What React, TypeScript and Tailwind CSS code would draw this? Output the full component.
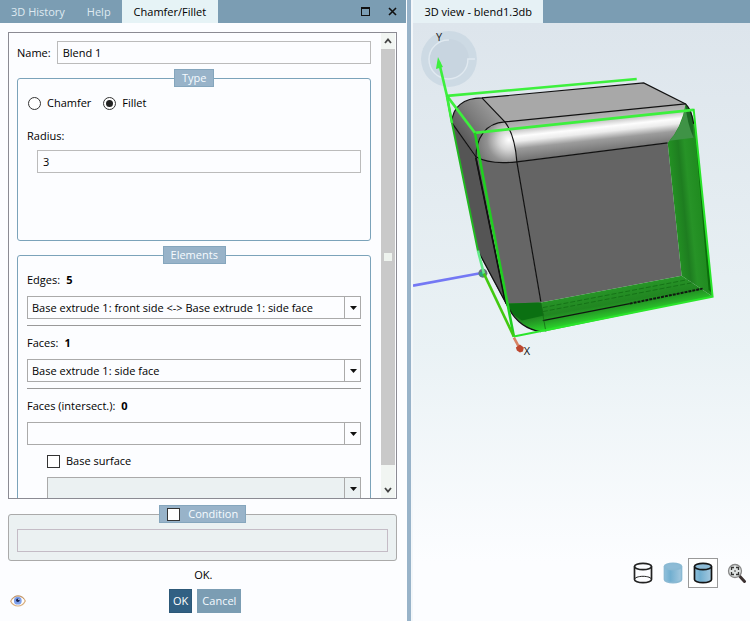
import { useState } from 'react'
import type { ReactNode } from 'react'
import clsx from 'clsx'

const edgeOptions = ['Base extrude 1: front side <-> Base extrude 1: side face']
const faceOptions = ['Base extrude 1: side face']

type GroupProps = {
  legend: ReactNode
  className?: string
  children: ReactNode
}

function Group({ legend, className, children }: GroupProps) {
  return (
    <fieldset className={clsx('min-w-0 rounded-[3px] border', className)}>
      <legend className="mx-auto flex h-[18px] items-center border border-[#85a6bd] bg-[#98b3c9] px-[7px] text-[#f6fbff]">
        {legend}
      </legend>
      {children}
    </fieldset>
  )
}

type ComboProps = {
  id: string
  label: string
  options: string[]
  disabled?: boolean
}

function Combo({ id, label, options, disabled }: ComboProps) {
  return (
    <div className="relative">
      <select
        id={id}
        aria-label={label}
        disabled={disabled}
        className={clsx(
          'block h-[23px] w-full appearance-none border border-[#aaa] pr-5 pl-1 opacity-100 outline-none',
          disabled ? 'bg-[#ebf1f2]' : 'bg-[#fcfdff]',
        )}
      >
        {options.map((o) => (
          <option key={o}>{o}</option>
        ))}
      </select>
      <span className="pointer-events-none absolute inset-y-0 right-0 flex w-[17px] items-center justify-center border-l border-[#aaa]">
        <svg viewBox="0 0 7 4" className="h-1 w-[7px]">
          <path d="M0 0h7L3.5 4z" fill="#111" />
        </svg>
      </span>
    </div>
  )
}

type ChoiceProps = {
  label: string
  checked: boolean
  onChange: () => void
}

function Choice({ label, checked, onChange }: ChoiceProps) {
  return (
    <label className="flex items-center gap-[6px]">
      <input
        type="radio"
        name="blend-type"
        checked={checked}
        onChange={onChange}
        className="grid size-[13px] appearance-none place-items-center rounded-full border border-[#333] bg-white before:size-[7px] before:rounded-full checked:before:bg-[#222]"
      />
      {label}
    </label>
  )
}

function Counter({ label, count, htmlFor }: { label: string; count: number; htmlFor: string }) {
  return (
    <label htmlFor={htmlFor} className="flex h-4 items-center gap-[6px]">
      {label} <b className="font-bold">{count}</b>
    </label>
  )
}

function Scrollbar() {
  return (
    <div className="mr-px flex w-[14px] shrink-0 flex-col bg-[#f1f5f2]">
      <button aria-label="Scroll up" className="grid h-4 place-items-center">
        <svg viewBox="0 0 8 6" className="h-[6px] w-2" fill="none" stroke="#444" strokeWidth="1.8">
          <path d="M1 5l3-3.5L7 5" />
        </svg>
      </button>
      <div className="grid flex-1 place-items-center bg-[#c9c9c9]">
        <span className="size-2 bg-[#eef3ee]" />
      </div>
      <button aria-label="Scroll down" className="flex h-[33px] items-end justify-center pb-[5px]">
        <svg viewBox="0 0 8 6" className="h-[6px] w-2" fill="none" stroke="#444" strokeWidth="1.8">
          <path d="M1 1l3 3.5L7 1" />
        </svg>
      </button>
    </div>
  )
}

function EyeIcon() {
  return (
    <svg viewBox="0 0 16 12" className="h-3 w-4">
      <path d="M.7 6.2C2.500 2.500 5 1 8 1s5.800 1.700 7.300 5C13.500 9.500 11 11 8 11S2.300 9.500.7 6.200z" fill="#fff" stroke="#d8ad7c" strokeWidth="1.200" />
      <path d="M2 4.200C4 1.500 6 .9 8 .9s4.200.8 6 3" fill="none" stroke="#c09870" />
      <circle cx="7.800" cy="5.700" r="3.900" fill="#7d9fea" />
      <circle cx="7.800" cy="5.300" r="1.700" fill="#1b2550" />
      <circle cx="8.800" cy="4.500" r=".6" fill="#fff" />
    </svg>
  )
}

function CylinderIcon({ fill, stroke, wire }: { fill: string; stroke: string; wire?: boolean }) {
  return (
    <svg viewBox="0 0 20 22" className="h-[22px] w-5" fill="none" stroke={stroke} strokeWidth="1.700">
      <defs>
        <linearGradient id="cylBody">
          <stop offset="0" stopColor="#8fc0dc" />
          <stop offset=".35" stopColor="#72afd0" />
          <stop offset="1" stopColor="#a5c9df" />
        </linearGradient>
      </defs>
      <path d="M1.500 4.500v13c0 1.800 3.800 3.200 8.500 3.200s8.500-1.400 8.500-3.200v-13" fill={fill} />
      <ellipse cx="10" cy="4.500" rx="8.500" ry="3.200" fill={wire ? 'none' : '#8dbbd6'} />
      {wire ? <path d="M1.500 17.500c0-1.800 3.800-3.200 8.500-3.200s8.500 1.400 8.500 3.200" strokeWidth="1" /> : null}
    </svg>
  )
}

function ZoomFitIcon() {
  return (
    <svg viewBox="0 0 20 20" className="size-5" fill="none">
      <path d="M12.500 13l5 5.500" stroke="#3c3232" strokeWidth="3" strokeLinecap="round" />
      <circle cx="8" cy="8" r="6.500" fill="#dfe3e3" stroke="#888" strokeWidth="1.300" />
      <path d="M4.500 7V4.500H7M9 4.500h2.500V7M11.500 9v2.500H9M7 11.500H4.500V9" stroke="#333" strokeWidth="1.300" />
      <path d="M7 8h2M8 7v2" stroke="#777" />
    </svg>
  )
}

function Scene() {
  return (
    <svg viewBox="413 23 337 500" className="block w-full" role="img" aria-label="Blended cube">
      <defs>
        <linearGradient id="topFillet" gradientUnits="userSpaceOnUse" x1="560" y1="116" x2="564.500" y2="157">
          <stop offset="0" stopColor="#a6a6a6" />
          <stop offset=".18" stopColor="#b8b8b8" />
          <stop offset=".38" stopColor="#fdfdfd" />
          <stop offset=".5" stopColor="#ececec" />
          <stop offset=".68" stopColor="#9c9c9c" />
          <stop offset="1" stopColor="#6e6e6e" />
        </linearGradient>
        <linearGradient id="leftFillet" gradientUnits="userSpaceOnUse" x1="458" y1="132" x2="490" y2="105">
          <stop offset="0" stopColor="#5b5b5b" />
          <stop offset=".5" stopColor="#7c7c7c" />
          <stop offset="1" stopColor="#999" />
        </linearGradient>
        <radialGradient id="corner" gradientUnits="userSpaceOnUse" cx="509" cy="140" r="34">
          <stop offset="0" stopColor="#fff" />
          <stop offset=".3" stopColor="#d6d6d6" />
          <stop offset=".65" stopColor="#929292" />
          <stop offset="1" stopColor="#727272" />
        </radialGradient>
        <linearGradient id="rightGreen" gradientUnits="userSpaceOnUse" x1="674" y1="200" x2="706" y2="197">
          <stop offset="0" stopColor="#239023" />
          <stop offset=".3" stopColor="#1e7d20" />
          <stop offset=".5" stopColor="#279327" />
          <stop offset=".8" stopColor="#218c21" />
          <stop offset="1" stopColor="#17a317" />
        </linearGradient>
        <linearGradient id="bottomGreen" gradientUnits="userSpaceOnUse" x1="620" y1="288" x2="625" y2="316">
          <stop offset="0" stopColor="#279427" />
          <stop offset=".5" stopColor="#218621" />
          <stop offset=".75" stopColor="#27a827" />
          <stop offset="1" stopColor="#2bd52b" />
        </linearGradient>
      </defs>

      {/* navigation disc */}
      <circle cx="449" cy="59" r="28" fill="#cddae4" />
      <circle cx="449" cy="59" r="20" fill="#c8d5e0" />
      <path d="M449 40a19.500 19.500 0 1 0 19 19h7" fill="none" stroke="#e0e9f0" strokeWidth="1.500" />
      <path d="M447 96L637 79" stroke="#3df03d" strokeWidth="2.600" />

      {/* solid */}
      <path d="M452 123L476 158L483 190L508 308L478 252z" fill="#555" />
      <path d="M476 157Q495 165 517 162L541 303L509 309z" fill="#666" />
      <path d="M517 162L668 143L682 276L541 303z" fill="#646464" />
      <path d="M482 98L644 83L686 104L505 122z" fill="#a8a8a8" />
      <path d="M452 123C452 107 464 98 482 98L505 122C485 123 476 139 476 158z" fill="url(#leftFillet)" />
      <path d="M505 122L686 104Q683 128 668 143L517 162Q515 135 505 122z" fill="url(#topFillet)" />
      <path d="M505 122C485 123 476 139 476 157Q490 165 517 162Q515 135 505 122z" fill="url(#corner)" />

      {/* selected faces */}
      <path d="M668 143Q682 128 686 104Q693 110 695 126L713 297L682 276z" fill="url(#rightGreen)" />
      <path d="M686 107Q682 127 670 141L694 138Q694 115 686 107z" fill="#3f9346" />
      <path d="M686 105Q694 111 694 138Q687 122 686 105z" fill="#1c6a24" />
      <path d="M694 116L696 140L709 290L712 293L699 160z" fill="#0b6d0b" />
      <path d="M509 304L541 303L682 276L713 297L545 332Q524 333 509 309z" fill="url(#bottomGreen)" />
      <path d="M509 304L541 303L544 316L522 321Q512 315 509 309z" fill="#0b7012" />
      <path d="M543 308L688 280M543 312L693 283" stroke="#126c14" strokeWidth=".8" strokeDasharray="5 2" />
      <path d="M543 321L630 304" stroke="#101810" strokeWidth="1.400" />
      <path d="M630 304L703 289" stroke="#101810" strokeWidth="2" strokeDasharray="3 1" />
      <path d="M541 303L546 332" stroke="#176b17" strokeWidth=".8" />

      <g fill="none" stroke="#111" strokeWidth="1.200">
        <path d="M452 123C452 107 464 98 482 98L644 83L686 104Q692 110 694 124" />
        <path d="M482 98L505 122L686 104" />
        <path d="M505 122Q515 135 517 162L541 302" />
        <path d="M505 122C485 123 476 139 476 158L483 192L506 304" />
        <path d="M452 123L476 157Q490 165 517 162L668 143" />
        <path d="M478 251L509 309Q520 329 541 332" />
      </g>
      <path d="M476 158L483 192L505 300" fill="none" stroke="#111" strokeWidth="1.800" />

      {/* bounding frame and axes */}
      <path d="M413 286L483 273" stroke="#7478f4" strokeWidth="2.600" />
      <circle cx="483" cy="273.500" r="4.500" fill="#69757c" />
      <circle cx="482" cy="274.500" r="2.500" fill="#2ba27e" />
      <g fill="none" stroke="#2be52b" strokeWidth="2.600">
        <path d="M439 62L447 96L475 133L694 110" stroke="#3df03d" />
        <path d="M447 96L452 123L478 251" strokeWidth="2" stroke="#20b820" />
        <path d="M447 96L452 123" stroke="#3df03d" />
        <path d="M478 251L484 274" stroke="#62eb88" />
        <path d="M475 133L486 192L514 337" stroke="#20d020" />
        <path d="M484 274L514 337" stroke="#42c910" />
        <path d="M514 337L713 297L694 109" strokeWidth="2" />
      </g>
      <path d="M438 57l5 10-7 2z" fill="#3df03d" />
      <path d="M514 338L520 349" stroke="#d78263" strokeWidth="2.600" />
      <path d="M516 348l4-3 4 3-1 4-3 1-3-2z" fill="#bd472f" />
      <text x="436" y="41" fontSize="11" fill="#222">Y</text>
      <text x="524" y="355" fontSize="11" fill="#111">X</text>
    </svg>
  )
}

const viewModes = [
  { id: 'wire', label: 'Wireframe', fill: 'none', stroke: '#222' },
  { id: 'shaded', label: 'Shaded', fill: 'url(#cylBody)', stroke: '#8ab9d3' },
  { id: 'edges', label: 'Shaded with edges', fill: 'url(#cylBody)', stroke: '#151515' },
]

export default function App() {
  const [name, setName] = useState('Blend 1')
  const [type, setType] = useState<'chamfer' | 'fillet'>('fillet')
  const [radius, setRadius] = useState('3')
  const [mode, setMode] = useState('edges')

  const inputClass = 'block h-[23px] w-full min-w-0 border border-[#bbb] bg-[#fcfdff] px-[5px] outline-none'
  const checkClass = 'size-[13px] appearance-none border border-[#333] bg-white checked:bg-[#333]'

  return (
    <div className="flex h-screen bg-[#fcfdff] font-['Open_Sans','Noto_Sans',sans-serif] text-[11px] leading-4 text-black">
      <section className="flex min-w-0 flex-[407] flex-col pr-px">
        <header className="flex h-[23px] shrink-0 items-stretch bg-[#7b9db3] text-[#dfeaf1]">
          <nav className="flex">
            <button className="px-[11px]">3D History</button>
            <button className="px-[11px]">Help</button>
            <button className="bg-[#e6f3f6] px-3 text-black">Chamfer/Fillet</button>
          </nav>
          <div className="ml-auto flex items-center gap-[18px] pr-[9px] text-black">
            <button aria-label="Maximize" className="h-[9px] w-[9px] border border-t-2 border-[#111]" />
            <button aria-label="Close">
              <svg viewBox="0 0 9 9" className="size-[9px]" stroke="#111" strokeWidth="1.600">
                <path d="M1 1l7 7M8 1L1 8" />
              </svg>
            </button>
          </div>
        </header>

        <form className="flex min-h-0 flex-1 flex-col px-2 pt-[9px] pb-2" onSubmit={(e) => e.preventDefault()}>
          <div className="mr-px flex min-h-0 flex-1 overflow-hidden border border-[#8b8b93]">
            <div className="min-w-0 flex-1 overflow-hidden pt-2 pr-[10px] pl-2">
              <div className="mb-[5px] flex items-center gap-[6px]">
                <label htmlFor="name">Name:</label>
                <input id="name" className={inputClass} value={name} onChange={(e) => setName(e.target.value)} />
              </div>

              <Group legend="Type" className="border-[#7ba3ba] px-[9px] pb-[67px]">
                <div className="flex gap-3 pt-2 pb-[17px] pl-px">
                  <Choice label="Chamfer" checked={type === 'chamfer'} onChange={() => setType('chamfer')} />
                  <Choice label="Fillet" checked={type === 'fillet'} onChange={() => setType('fillet')} />
                </div>
                <label htmlFor="radius" className="block pb-[6px]">
                  Radius:
                </label>
                <div className="pl-[10px]">
                  <input id="radius" className={inputClass} value={radius} onChange={(e) => setRadius(e.target.value)} />
                </div>
              </Group>

              <Group legend="Elements" className="mt-[5px] border-[#7ba3ba] px-[9px] pb-4">
                <div className="flex flex-col gap-2 pt-2">
                  <Counter label="Edges:" count={5} htmlFor="edges" />
                  <Combo id="edges" label="Edges" options={edgeOptions} />
                </div>
                <hr className="mt-[6px] mb-[9px] border-[#999]" />
                <div className="flex flex-col gap-2">
                  <Counter label="Faces:" count={1} htmlFor="faces" />
                  <Combo id="faces" label="Faces" options={faceOptions} />
                </div>
                <hr className="mt-[6px] mb-[9px] border-[#999]" />
                <div className="flex flex-col gap-2">
                  <Counter label="Faces (intersect.):" count={0} htmlFor="intersect" />
                  <Combo id="intersect" label="Intersecting faces" options={[]} />
                  <div className="flex flex-col gap-2 pl-5">
                    <label className="flex items-center gap-[6px]">
                      <input type="checkbox" className={checkClass} />
                      Base surface
                    </label>
                    <Combo id="base-surface" label="Base surface" options={[]} disabled />
                  </div>
                </div>
              </Group>
            </div>
            <Scrollbar />
          </div>

          <Group
            legend={
              <label className="flex items-center gap-2">
                <input type="checkbox" className={checkClass} />
                Condition
              </label>
            }
            className="mt-[6px] mr-px shrink-0 border-[#aaa] bg-[#ebf1f2] px-2 pb-2"
          >
            <input aria-label="Condition" disabled className="mt-[6px] block h-[23px] w-full border border-[#c4bcc6] px-[5px]" />
          </Group>

          <output className="mt-[6px] mb-[6px] block text-center">OK.</output>
          <div className="grid grid-cols-[1fr_auto_1fr] items-center">
            <button type="button" aria-label="Preview" className="ml-[2px] justify-self-start">
              <EyeIcon />
            </button>
            <div className="flex gap-[5px] pl-1">
              <button className="h-6 border border-[#2c5878] bg-[#316083] px-[3px] text-white">OK</button>
              <button type="button" className="h-6 bg-[#7b9db3] px-[5px] text-[#f4faff]">
                Cancel
              </button>
            </div>
          </div>
        </form>
      </section>

      <div className="w-[6px] shrink-0 border-r-2 border-[#f3f7fa] bg-[#98b3c9]" />

      <section className="flex min-w-0 flex-[337] flex-col">
        <header className="flex h-[23px] shrink-0 bg-[#7b9db3]">
          <button className="bg-[#e6f1f5] px-[11px]">3D view - blend1.3db</button>
        </header>
        <div className="flex min-h-0 flex-1 flex-col overflow-hidden bg-linear-to-b from-[#dde5ec] via-[#eaf2f5] via-55% to-[#fcfdff] to-90%">
          <Scene />
          <div className="mt-auto flex items-center justify-end pb-[33px]">
            {viewModes.map((m) => (
              <button
                key={m.id}
                aria-label={m.label}
                onClick={() => setMode(m.id)}
                className={clsx(
                  'grid size-[30px] place-items-center border',
                  mode === m.id ? 'border-[#999] bg-white' : 'border-transparent',
                )}
              >
                <CylinderIcon fill={m.fill} stroke={m.stroke} wire={m.id === 'wire'} />
              </button>
            ))}
            <button aria-label="Zoom to fit" className="ml-[6px] grid h-[30px] w-[26px] place-items-center">
              <ZoomFitIcon />
            </button>
          </div>
        </div>
      </section>
    </div>
  )
}
